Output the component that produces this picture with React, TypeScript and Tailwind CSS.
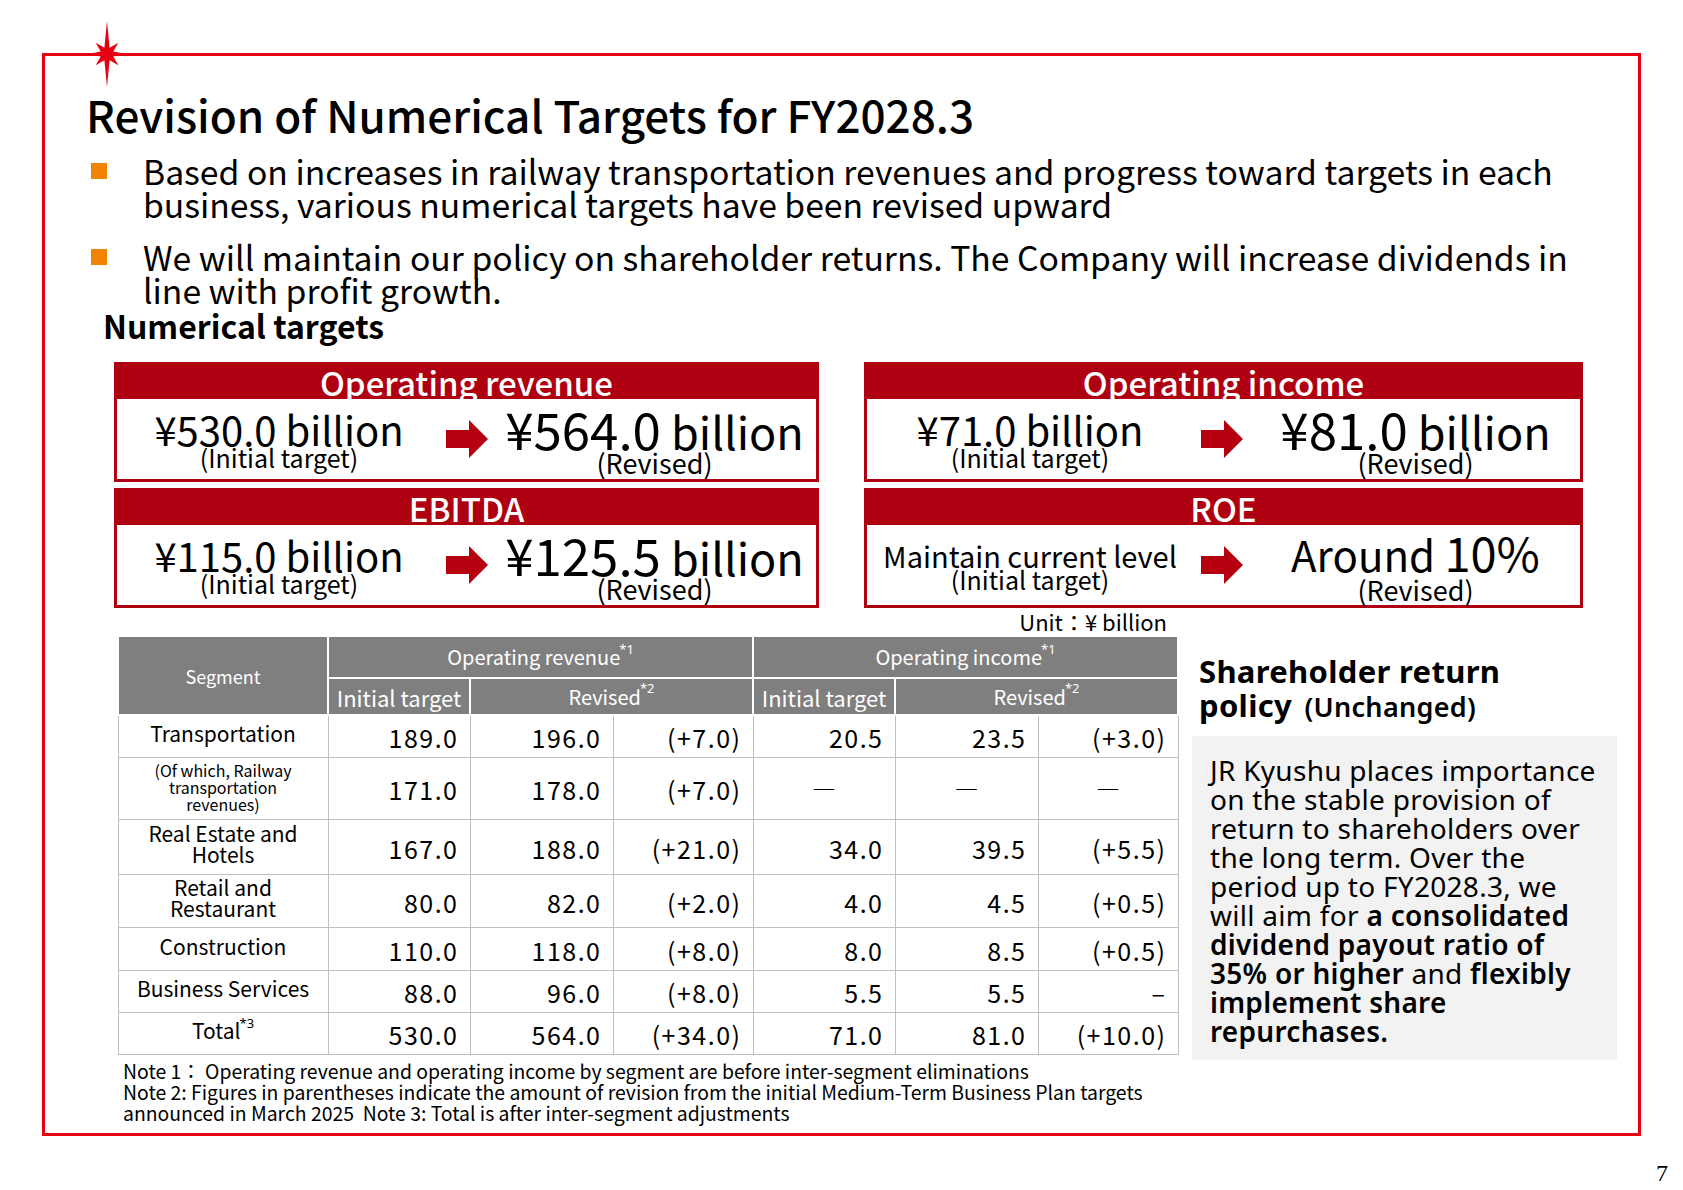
import type { ReactNode } from 'react';

function Star() {
  // eight-point sparkle sitting on the frame corner
  const tips = [33, 16, 19, 16, 33, 16, 19, 16];
  const pts: string[] = [];
  for (let i = 0; i < 16; i++) {
    const a = (i * Math.PI) / 8;
    const r = i % 2 === 0 ? tips[i / 2] : 6.8;
    pts.push(`${(35 + r * Math.sin(a)).toFixed(2)},${(35 - r * Math.cos(a)).toFixed(2)}`);
  }
  return (
    <svg className="absolute left-[72px] top-[19px]" width="70" height="70" viewBox="0 0 70 70">
      <polygon points={pts.join(' ')} fill="#e60012" />
    </svg>
  );
}

function Arrow() {
  return (
    <svg width="42" height="38" viewBox="0 0 42 38">
      <path d="M0 10H23V0L42 19L23 38V28H0Z" fill="#b5000f" />
    </svg>
  );
}

interface MetricProps {
  title: string;
  from: ReactNode;
  fromSub: string;
  to: ReactNode;
  toSub: string;
  wide?: boolean;
  fromCls?: string;
  toCls?: string;
  toSubCls?: string;
}

function Metric({ title, from, fromSub, to, toSub, wide, fromCls, toCls, toSubCls }: MetricProps) {
  return (
    <div className={wide ? 'w-[719px] border-[3px] border-[#ae0010]' : 'w-[705px] border-[3px] border-[#ae0010]'}>
      <div className="h-[34px] bg-[#ae0010] text-white text-center text-[33px] leading-[34px] font-medium">{title}</div>
      <div
        className={
          wide
            ? 'h-[80px] grid grid-cols-[326px_58px_1fr]'
            : 'h-[80px] grid grid-cols-[324px_52px_1fr]'
        }
      >
        <div className={`flex flex-col items-center pt-[19px] ${fromCls ?? ''}`}>
          <div className="leading-[22px] whitespace-nowrap">{from}</div>
          <div className="text-[25px] leading-[18px] -mt-[2px] whitespace-nowrap">{fromSub}</div>
        </div>
        <div className="flex justify-center pt-[21px]">
          <Arrow />
        </div>
        <div className="flex flex-col items-center pt-[17px]">
          <div className={`leading-[24px] whitespace-nowrap ${toCls ?? ''}`}>{to}</div>
          <div className={`text-[27px] leading-[18px] -mt-[1px] whitespace-nowrap ${toSubCls ?? ''}`}>{toSub}</div>
        </div>
      </div>
    </div>
  );
}

function Yen({ n, big }: { n: string; big?: boolean }) {
  if (big) {
    return (
      <span>
        <span className="text-[51px]">¥{n}</span>
        <span className="text-[45px]"> billion</span>
      </span>
    );
  }
  return <span className="text-[40px]">¥{n} billion</span>;
}

function Sup({ children }: { children: ReactNode }) {
  return <sup className="text-[13px] align-[5px] -ml-[1px] font-['Noto_Sans',sans-serif]">{children}</sup>;
}

const rows: { seg: ReactNode; h: string; v: string[]; small?: boolean }[] = [
  { seg: 'Transportation', h: 'h-[42px]', v: ['189.0', '196.0', '(+7.0)', '20.5', '23.5', '(+3.0)'] },
  {
    seg: (
      <>
        (Of which, Railway
        <br />
        transportation
        <br />
        revenues)
      </>
    ),
    h: 'h-[62px]',
    v: ['171.0', '178.0', '(+7.0)', '―', '―', '―'],
    small: true,
  },
  {
    seg: (
      <>
        Real Estate and
        <br />
        Hotels
      </>
    ),
    h: 'h-[55px]',
    v: ['167.0', '188.0', '(+21.0)', '34.0', '39.5', '(+5.5)'],
  },
  {
    seg: (
      <>
        Retail and
        <br />
        Restaurant
      </>
    ),
    h: 'h-[53px]',
    v: ['80.0', '82.0', '(+2.0)', '4.0', '4.5', '(+0.5)'],
  },
  { seg: 'Construction', h: 'h-[43px]', v: ['110.0', '118.0', '(+8.0)', '8.0', '8.5', '(+0.5)'] },
  { seg: 'Business Services', h: 'h-[42px]', v: ['88.0', '96.0', '(+8.0)', '5.5', '5.5', '–'] },
  {
    seg: (
      <>
        Total<Sup>*3</Sup>
      </>
    ),
    h: 'h-[42px]',
    v: ['530.0', '564.0', '(+34.0)', '71.0', '81.0', '(+10.0)'],
  },
];

function SegmentTable() {
  const th = 'bg-[#7f7f7f] text-white font-normal border-2 border-white leading-[24px]';
  return (
    <table className="w-[1060px] table-fixed border-collapse border border-[#bfbfbf]">
      <colgroup>
        <col className="w-[210px]" />
        <col className="w-[142px]" />
        <col className="w-[143px]" />
        <col className="w-[140px]" />
        <col className="w-[142px]" />
        <col className="w-[143px]" />
        <col className="w-[140px]" />
      </colgroup>
      <thead>
        <tr className="h-[42px]">
          <th rowSpan={2} className={`${th} text-[18px]`}>
            Segment
          </th>
          <th colSpan={3} className={`${th} text-[20px]`}>
            Operating revenue<Sup>*1</Sup>
          </th>
          <th colSpan={3} className={`${th} text-[20px]`}>
            Operating income<Sup>*1</Sup>
          </th>
        </tr>
        <tr className="h-[37px]">
          <th className={`${th} text-[22px]`}>Initial target</th>
          <th colSpan={2} className={`${th} text-[20px]`}>
            Revised<Sup>*2</Sup>
          </th>
          <th className={`${th} text-[22px]`}>Initial target</th>
          <th colSpan={2} className={`${th} text-[20px]`}>
            Revised<Sup>*2</Sup>
          </th>
        </tr>
      </thead>
      <tbody>
        {rows.map((r, i) => (
          <tr key={i} className={r.h}>
            <td
              className={
                r.small
                  ? 'border border-[#bfbfbf] text-center text-[16px] leading-[17px] pb-[1px]'
                  : 'border border-[#bfbfbf] text-center text-[21px] leading-[21px] pb-[5px]'
              }
            >
              {r.seg}
            </td>
            {r.v.map((c, j) => (
              <td
                key={j}
                className={
                  c === '―'
                    ? 'border border-[#bfbfbf] text-center text-[24px] leading-[26px]'
                    : 'border border-[#bfbfbf] text-right pr-[11px] text-[25px] leading-[26px] pt-[2px] tracking-[0.06em] whitespace-nowrap'
                }
              >
                {c}
              </td>
            ))}
          </tr>
        ))}
      </tbody>
    </table>
  );
}

export default function App() {
  return (
    <div className="relative w-[1683px] h-[1190px] bg-white overflow-hidden text-black font-['Noto_Sans_CJK_JP','Noto_Sans',sans-serif]">
      <div className="ml-[42px] mt-[53px] w-[1599px] h-[1083px] border-[3px] border-[#e60012]">
        <h1 className="ml-[41px] mt-[36px] text-[44px] leading-[44px] font-medium">
          Revision of Numerical Targets for FY2028.3
        </h1>

        <div className="ml-[46px] mt-[18px] text-[33.7px] leading-[33px]">
          <div className="flex">
            <div className="w-[52px] shrink-0 pt-[9px]">
              <div className="w-[16px] h-[16px] bg-[#f08300]" />
            </div>
            <p>
              Based on increases in railway transportation revenues and progress toward targets in each
              <br />
              business, various numerical targets have been revised upward
            </p>
          </div>
          <div className="flex mt-[20px]">
            <div className="w-[52px] shrink-0 pt-[9px]">
              <div className="w-[16px] h-[16px] bg-[#f08300]" />
            </div>
            <p>
              We will maintain our policy on shareholder returns. The Company will increase dividends in
              <br />
              line with profit growth.
            </p>
          </div>
        </div>

        <div className="ml-[58px] mt-[2px] text-[32px] leading-[34px] font-semibold">Numerical targets</div>

        <div className="ml-[69px] mt-[20px] flex gap-[45px]">
          <div className="flex flex-col gap-[6px]">
            <Metric
              title="Operating revenue"
              from={<Yen n="530.0" />}
              fromSub="(Initial target)"
              to={<Yen n="564.0" big />}
              toSub="(Revised)"
            />
            <Metric
              title="EBITDA"
              from={<Yen n="115.0" />}
              fromSub="(Initial target)"
              to={<Yen n="125.5" big />}
              toSub="(Revised)"
            />
          </div>
          <div className="flex flex-col gap-[6px]">
            <Metric
              wide
              title="Operating income"
              from={<Yen n="71.0" />}
              fromSub="(Initial target)"
              to={<Yen n="81.0" big />}
              toSub="(Revised)"
            />
            <Metric
              wide
              title="ROE"
              fromCls="pt-[19px]"
              from={<span className="text-[29px]">Maintain current level</span>}
              fromSub="(Initial target)"
              toCls="-mt-[2px]"
              toSubCls="mt-[4px]"
              to={
                <span>
                  <span className="text-[42px]">Around </span>
                  <span className="text-[47px]">10%</span>
                </span>
              }
              toSub="(Revised)"
            />
          </div>
        </div>

        <div className="ml-[72px] mt-[1px] w-[1060px] pr-[10px] text-right text-[22px] leading-[24px]">Unit：¥ billion</div>

        <div className="flex mt-[2px]">
          <div className="ml-[72px] w-[1060px]">
            <SegmentTable />
            <div className="ml-[6px] mt-[5px] text-[19.4px] leading-[21px]">
              <p>Note 1：&nbsp;Operating revenue and operating income by segment are before inter-segment eliminations</p>
              <p>
                Note 2: Figures in parentheses indicate the amount of revision from the initial Medium-Term Business Plan targets
                <br />
                announced in March 2025&nbsp;&nbsp;Note 3: Total is after inter-segment adjustments
              </p>
            </div>
          </div>

          <div className="ml-[15px] w-[425px] font-['Noto_Sans',sans-serif]">
            <div className="mt-[19px] pl-[7px] text-[31px] leading-[34px] font-bold tracking-[0.01em]">
              Shareholder return
              <br />
              policy <span className="ml-[4px] text-[27px] font-semibold">(Unchanged)</span>
            </div>
            <div className="mt-[12px] h-[324px] bg-[#f2f2f2] pl-[18px] pt-[20px] text-[28px] leading-[29px] tracking-[0.01em]">
              JR Kyushu places importance
              <br />
              on the stable provision of
              <br />
              return to shareholders over
              <br />
              the long term. Over the
              <br />
              period up to FY2028.3, we
              <br />
              will aim for <b className="font-semibold">a consolidated</b>
              <br />
              <b className="font-semibold">dividend payout ratio of</b>
              <br />
              <b className="font-semibold">35% or higher</b> and <b className="font-semibold">flexibly</b>
              <br />
              <b className="font-semibold">implement share</b>
              <br />
              <b className="font-semibold">repurchases.</b>
            </div>
          </div>
        </div>
      </div>

      <div className="mt-[25px] pr-[15px] text-right text-[24px] leading-[24px] font-['Liberation_Serif',serif]">7</div>

      <Star />
    </div>
  );
}
